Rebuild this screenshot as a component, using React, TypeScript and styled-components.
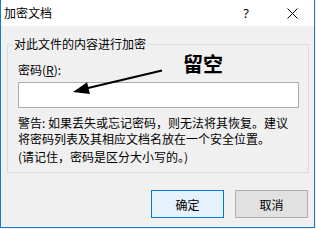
import React from "react";
import styled, { createGlobalStyle } from "styled-components";

const GlobalStyle = createGlobalStyle`
  html, body { margin: 0; padding: 0; background: #f0f0f0; }
  body {
    font-family: "Noto Sans CJK SC", "Microsoft YaHei UI", sans-serif;
    font-size: 12px;
    color: #000;
  }
  * { box-sizing: border-box; }
`;

const Window = styled.div`
  position: relative;
  width: 315px;
  height: 228px;
  border: 1px solid #1979ca;
  border-top: none;
  background: #f0f0f0;
  display: flex;
  flex-direction: column;
`;

const TitleBar = styled.div`
  height: 26px;
  background: #fff;
  display: flex;
  align-items: center;
  padding-left: 3px;
`;

const Title = styled.div`
  flex: 1;
  font-size: 12px;
  line-height: 14px;
`;

const TitleButton = styled.div<{ $w: number }>`
  width: ${(p) => p.$w}px;
  height: 26px;
  display: flex;
  align-items: center;
  justify-content: center;
  font-size: 13px;
  font-family: "Segoe UI", "Noto Sans", sans-serif;
`;

const Body = styled.div`
  flex: 1;
  display: flex;
  flex-direction: column;
  padding: 0 5px 0 6px;
`;

const Group = styled.div`
  margin-top: 18px;
  border: 1px solid #dcdcdc;
  padding: 0 9px 7px 10px;
  display: flex;
  flex-direction: column;
`;

const Legend = styled.div`
  align-self: flex-start;
  margin: -8px 0 0 -6px;
  padding: 0 2px;
  line-height: 14px;
  background: #f0f0f0;
`;

const Label = styled.div`
  margin-top: 11px;
  line-height: 16px;
  u { text-decoration: underline; text-underline-offset: 1px; }
`;

const Input = styled.div`
  margin-top: 4px;
  height: 26px;
  width: 100%;
  background: #fff;
  border: 1px solid #acacac;
`;

const Warning = styled.div`
  margin-top: 7px;
  line-height: 16px;
`;

const WarnLine = styled.div<{ $gap?: number }>`
  margin-top: ${(p) => p.$gap ?? 0}px;
  white-space: nowrap;
`;

const ButtonRow = styled.div`
  margin-top: 17px;
  margin-right: 1px;
  display: flex;
  justify-content: flex-end;
  gap: 11px;
`;

const Button = styled.div<{ $primary?: boolean }>`
  width: 73px;
  height: 28px;
  display: flex;
  align-items: center;
  justify-content: center;
  font-size: 12px;
  background: ${(p) => (p.$primary ? "#e5f1fb" : "#e1e1e1")};
  border: 1px solid ${(p) => (p.$primary ? "#0078d7" : "#adadad")};
`;

const Note = styled.div`
  position: absolute;
  left: 182px;
  top: 53px;
  font-size: 20px;
  line-height: 22px;
  font-weight: 700;
`;

const Overlay = styled.svg`
  position: absolute;
  left: 0;
  top: 0;
  pointer-events: none;
`;

export default function App() {
  return (
    <>
      <GlobalStyle />
      <Window>
        <TitleBar>
          <Title>加密文档</Title>
          <TitleButton $w={50}>?</TitleButton>
          <TitleButton $w={43}>
            <svg width="11" height="11" viewBox="0 0 11 11">
              <path d="M0.5 0.5 L10.5 10.5 M10.5 0.5 L0.5 10.5" stroke="#000" strokeWidth="1" />
            </svg>
          </TitleButton>
        </TitleBar>
        <Body>
          <Group>
            <Legend>对此文件的内容进行加密</Legend>
            <Label>
              密码(<u>R</u>):
            </Label>
            <Input />
            <Warning>
              <WarnLine>警告: 如果丢失或忘记密码，则无法将其恢复。建议</WarnLine>
              <WarnLine>将密码列表及其相应文档名放在一个安全位置。</WarnLine>
              <WarnLine $gap={2}>(请记住，密码是区分大小写的。)</WarnLine>
            </Warning>
          </Group>
          <ButtonRow>
            <Button $primary>确定</Button>
            <Button>取消</Button>
          </ButtonRow>
        </Body>
        <Note>留空</Note>
        <Overlay width="315" height="228" viewBox="0 0 315 228">
          <line x1="161" y1="70.5" x2="86" y2="88.3" stroke="#000" strokeWidth="2" />
          <polygon points="72,92 88.9,94 86.1,82.3" fill="#000" />
        </Overlay>
      </Window>
    </>
  );
}
